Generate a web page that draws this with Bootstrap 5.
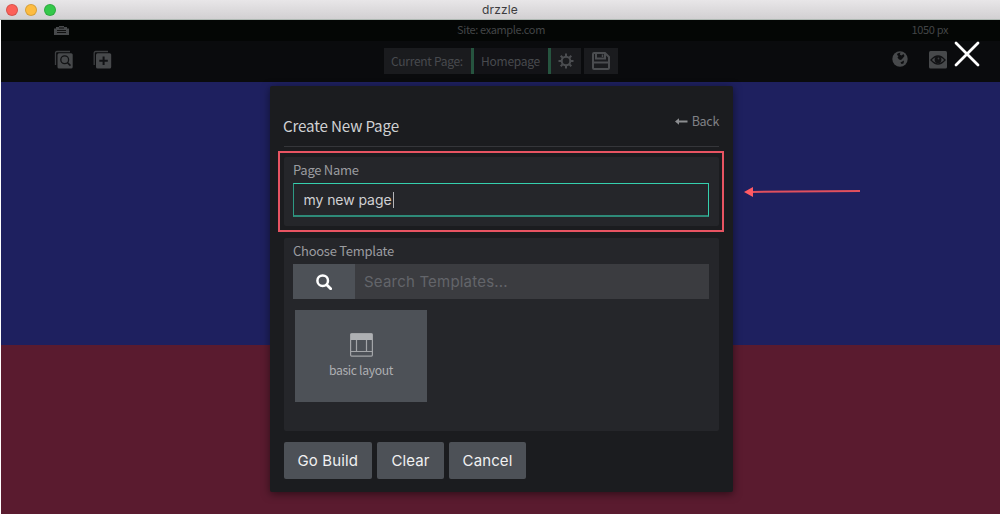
<!DOCTYPE html>
<html lang="en">
<head>
<meta charset="utf-8">
<title>drzzle</title>
<link href="https://cdn.jsdelivr.net/npm/bootstrap@5.3.0/dist/css/bootstrap.min.css" rel="stylesheet">
<style>
body{font-family:"Noto Sans CJK SC",sans-serif;background:#fff;height:514px;overflow:hidden;font-size:13px;line-height:20px;color:#9b9ca0}
svg{display:block;flex:none}
.ui{font-family:Inter,sans-serif}
.titlebar{height:20px;background:linear-gradient(#e8e6e8,#d2d0d2);border-bottom:1px solid #aeb8b2;color:#3c3c3e;font-size:12px;line-height:19px;letter-spacing:.15px}
.dot{width:12px;height:12px;border-radius:50%;margin-right:7px;border:.5px solid rgba(0,0,0,.15)}
.desk{margin-left:1px;height:494px}
.info{height:21px;background:#040605;color:#434547;font-size:11px;line-height:18px;letter-spacing:-.36px}
.tools{height:41px;background:#0a0b0d;color:#484a4e}
.blue{height:263px;background:#1e205f}
.maroon{height:169px;background:#5a1b2f}
.seg{height:26px;background:#1a1b1e;line-height:26px;font-size:12px;letter-spacing:-.28px}
.seg-end{border-right:3px solid #26543f}
.dialog{left:270px;top:86px;width:463px;height:406px;padding:0 14px;background:#1b1c1f;border-radius:2px;box-shadow:0 2px 8px rgba(0,0,0,.5)}
.head{height:61px;border-bottom:1px solid #35363a}
.head h1{font-size:15.2px;line-height:20px;color:#d0d1d3;font-weight:400;letter-spacing:-.17px;margin:29px 0 0 -1px}
.back{font-size:12.5px;letter-spacing:-.3px;color:#808186;margin-top:25px}
.panel{background:#25262a;padding:0 10px 0 9px;border-radius:2px}
.panel label{display:block;font-size:13px;line-height:20px;letter-spacing:-.27px}
.field{height:34px;border:1px solid #35d0ae;border-bottom:2px solid #2e8a78;border-left-color:#2e9a84;color:#d0d0d3;font-size:14px;letter-spacing:-.07px;padding-left:9.5px}
.caret{width:1px;height:16px;background:#b5b5b8;margin-left:1px}
.glass{width:62px;background:#4d5157}
.find{height:35px;background:#3b3c40;color:#63656a;font-size:15px;letter-spacing:.2px}
.tile{width:132px;height:92px;margin:11px 0 0 2px;background:#4d5157;color:#adafb2;font-size:12.2px;line-height:18px;letter-spacing:-.35px}
.act{height:37px;padding:2px 0 0;background:#4d5157;color:#f0f0f1;font-size:15px;letter-spacing:.1px;border:0;border-radius:2px;--bs-btn-hover-bg:#5a5e65}
.mark-box{left:278px;top:151px;width:446px;height:81px;border:2px solid #e85462}
.close-x{left:954px;top:41px}
.arrow{left:744px;top:184px}
</style>
</head>
<body>
<header class="titlebar ui d-flex align-items-center position-relative ps-1">
  <div class="d-flex" style="margin-left:2px"><span class="dot" style="background:#fc6058"></span><span class="dot" style="background:#fdbc40"></span><span class="dot" style="background:#34c84a"></span></div>
  <span class="position-absolute start-0 w-100 text-center">drzzle</span>
</header>
<main class="desk">
  <div class="info row g-0">
    <div class="col" style="padding:6px 0 0 53px"><svg width="15" height="9" viewBox="0 0 15 9"><path d="M0 2.500h2V1h3V0h5v1h3v1.500h2V9H0z" fill="#47494b"/><path d="M5 2h5M3 4.500h9M3 6.500h9" stroke="#111" fill="none"/></svg></div>
    <div class="col text-center">Site: example.com</div>
    <div class="col text-end" style="padding-right:52px">1050 px</div>
  </div>
  <nav class="tools row g-0">
    <div class="col d-flex" style="gap:20px;padding:9px 0 0 53px">
      <svg width="19" height="19" viewBox="0 0 19 19"><path d="M1.500 15V3Q1.500 1.500 3 1.500H16" fill="none" stroke="#3c3e40" stroke-width="1.300"/><rect x="3.500" y="3.300" width="15.200" height="15.200" rx="1.500" fill="#47494b"/><circle cx="10.700" cy="9.800" r="3.900" fill="none" stroke="#111214" stroke-width="1.300"/><path d="M13.500 12.600l3 3" stroke="#111214" stroke-width="1.500"/></svg>
      <svg width="19" height="19" viewBox="0 0 19 19"><path d="M1.200 15V3Q1.200 1.500 2.700 1.500H15" fill="none" stroke="#3c3e40" stroke-width="1.300"/><rect x="3" y="3.300" width="15.200" height="15.200" rx="1.500" fill="#47494b"/><path d="M10.600 6.500v8.500M6.300 10.700h8.500" stroke="#111214" stroke-width="2"/></svg>
    </div>
    <div class="col-auto d-flex" style="padding-top:7px">
      <div class="seg seg-end text-center" style="width:90px">Current Page:</div>
      <div class="seg seg-end text-center" style="width:77px;background:#131317">Homepage</div>
      <div class="seg d-flex align-items-center justify-content-center" style="width:30px"><svg width="16" height="16" viewBox="0 0 16 16" fill="none" stroke="#4b4d50"><circle cx="8" cy="8" r="4.300" stroke-width="2"/><path d="M8 .5v3M8 12.500v3M.5 8h3M12.500 8h3M2.700 2.700l2 2M11.300 11.300l2 2M2.700 13.300l2-2M11.300 4.700l2-2" stroke-width="2"/></svg></div>
      <div class="seg d-flex align-items-center justify-content-center" style="width:34px;margin-left:3px"><svg width="18" height="18" viewBox="0 0 18 18" fill="none" stroke="#4b4d50" stroke-width="2"><path d="M1 2q0-1 1-1h11l4 4v11q0 1-1 1H2q-1 0-1-1z"/><path d="M4 1v5.500h9V1M1.500 10.500h15"/><path d="M10.500 2.500v2.500" stroke-width="1.500"/></svg></div>
    </div>
    <div class="col d-flex justify-content-end" style="gap:21px;padding:10px 53px 0 0">
      <svg width="16" height="16" viewBox="0 0 16 16"><circle cx="8" cy="8" r="7.700" fill="#47494b"/><path d="M5.500 2.500L8.500 1.500 7.800 3.500 9.500 4.500 11.500 3 12.500 5 10.500 7.500 9 9 7 8.500 5.500 6.500 6.500 5 5 4z" fill="#0d0e10"/><path d="M8.500 11.500L12 9.500l-.5 3L9.500 13z" fill="#0d0e10"/></svg>
      <svg width="18" height="18" viewBox="0 0 18 18"><rect width="18" height="17.500" rx="1.500" fill="#47494b"/><path d="M2 9q7-8 14 0q-7 8-14 0z" fill="none" stroke="#111214" stroke-width="1.300"/><circle cx="9" cy="8.700" r="3.400" fill="#111214"/><circle cx="9.500" cy="7.500" r=".9" fill="#3a3c3f"/></svg>
    </div>
  </nav>
  <section class="blue"></section>
  <section class="maroon"></section>
</main>

<div class="dialog position-absolute">
  <div class="head d-flex justify-content-between">
    <h1>Create New Page</h1>
    <div class="back d-flex" style="gap:4px"><svg width="13" height="20" viewBox="0 0 13 20"><path d="M0 10.500L4 7.300v2.200h8.500v2H4v2.200z" fill="#8c8d90"/></svg>Back</div>
  </div>
  <div class="panel" style="height:69px;margin-top:10px;padding-top:3px">
    <label>Page Name</label>
    <div class="field ui d-flex align-items-center" style="margin-top:3px;padding-top:1px">my new page<span class="caret"></span></div>
  </div>
  <div class="panel" style="height:193px;margin-top:12px;padding-top:3px">
    <label>Choose Template</label>
    <div class="find ui d-flex" style="margin-top:3px">
      <div class="glass d-flex align-items-center justify-content-center"><svg width="16" height="16" viewBox="0 0 16 16" fill="none" stroke="#fff"><circle cx="6.700" cy="6.700" r="5.300" stroke-width="2.500"/><path d="M10.700 10.700l4 4" stroke-width="2.800" stroke-linecap="round"/></svg></div>
      <span class="align-self-center" style="padding:1px 0 0 9px">Search Templates...</span>
    </div>
    <div class="tile d-flex flex-column align-items-center" style="padding-top:23px">
      <svg width="23" height="24" viewBox="0 0 23 24" fill="none" stroke="#a3a5a8"><rect x=".6" y=".6" width="21.800" height="22.500" rx="1" stroke-width="1.200"/><path d="M1 1h21v6H1z" fill="#aeb0b3" stroke="none"/><path d="M6.500 7v11M16.500 7v11M1 18.500h21" stroke-width="1.200"/></svg>
      <span style="margin-top:4px">basic layout</span>
    </div>
  </div>
  <div class="d-flex ui" style="gap:5px;margin:11px 0 0 -.5px">
    <button class="btn act" style="width:88.5px">Go Build</button>
    <button class="btn act" style="width:67px">Clear</button>
    <button class="btn act" style="width:77px">Cancel</button>
  </div>
</div>

<div class="mark-box position-absolute"></div>
<svg class="arrow position-absolute" width="118" height="16" viewBox="0 0 118 16"><path d="M8 7.900L116 7" stroke="#e0505e" stroke-width="2"/><path d="M0 7.900L9 3v10z" fill="#ff5a64"/></svg>
<svg class="close-x position-absolute" width="26" height="26" viewBox="0 0 26 26"><path d="M2 2l22 22M24 2L2 24" stroke="#fff" stroke-width="2.800" stroke-linecap="round"/></svg>
<script src="https://cdn.jsdelivr.net/npm/bootstrap@5.3.0/dist/js/bootstrap.bundle.min.js"></script>
</body>
</html>
